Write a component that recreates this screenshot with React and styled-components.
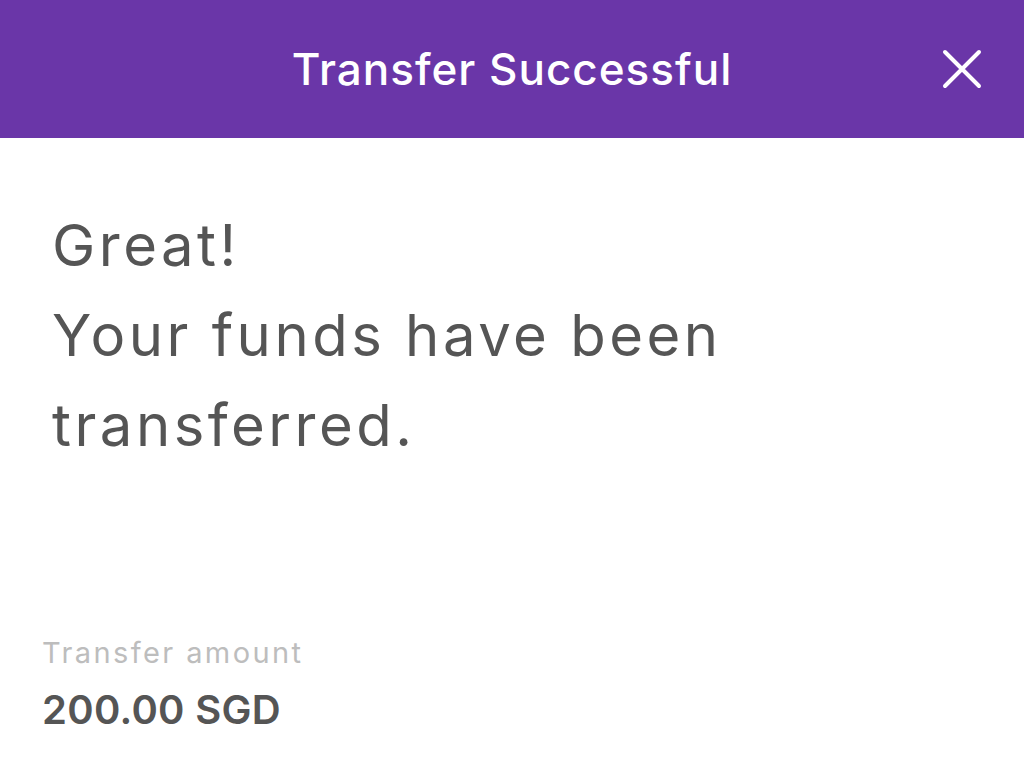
import React from 'react';
import styled, { createGlobalStyle } from 'styled-components';

const GlobalStyle = createGlobalStyle`
  html, body {
    margin: 0;
    padding: 0;
    background: #ffffff;
  }
  body {
    font-family: Inter, "Open Sans", sans-serif;
  }
`;

const Screen = styled.div`
  width: 1024px;
  height: 768px;
  display: flex;
  flex-direction: column;
  background: #fff;
  overflow: hidden;
`;

const Header = styled.header`
  height: 138px;
  background: #6a36a8;
  display: flex;
  align-items: center;
  justify-content: center;
  position: relative;
`;

const Title = styled.h1`
  margin: 0;
  color: #fff;
  font-size: 44px;
  font-weight: 500;
  letter-spacing: 1px;
`;

const CloseButton = styled.button`
  position: absolute;
  right: 40px;
  top: 50%;
  transform: translateY(-50%);
  width: 44px;
  height: 44px;
  padding: 0;
  border: none;
  background: transparent;
  display: flex;
  align-items: center;
  justify-content: center;
  cursor: pointer;
`;

const Body = styled.main`
  flex: 1;
  display: flex;
  flex-direction: column;
  padding: 62px 42px 0;
`;

const Message = styled.p`
  margin: 0 0 0 10px;
  color: #555555;
  font-size: 58px;
  font-weight: 400;
  line-height: 90px;
  letter-spacing: 3.5px;
`;

const Detail = styled.div`
  margin-top: 165px;
  display: flex;
  flex-direction: column;
  gap: 15px;
`;

const Label = styled.span`
  color: #bdbdbd;
  font-size: 29px;
  font-weight: 400;
  line-height: 36px;
  letter-spacing: 2.4px;
`;

const Amount = styled.span`
  color: #555555;
  font-size: 40px;
  font-weight: 600;
  line-height: 48px;
  letter-spacing: 0.3px;
`;

export default function App() {
  return (
    <Screen>
      <GlobalStyle />
      <Header>
        <Title>Transfer Successful</Title>
        <CloseButton aria-label="Close">
          <svg width="40" height="40" viewBox="0 0 40 40">
            <path d="M3 3 L37 37 M37 3 L3 37" stroke="#fff" strokeWidth="4" strokeLinecap="round" />
          </svg>
        </CloseButton>
      </Header>
      <Body>
        <Message>
          Great!
          <br />
          Your funds have been
          <br />
          transferred.
        </Message>
        <Detail>
          <Label>Transfer amount</Label>
          <Amount>200.00 SGD</Amount>
        </Detail>
      </Body>
    </Screen>
  );
}
